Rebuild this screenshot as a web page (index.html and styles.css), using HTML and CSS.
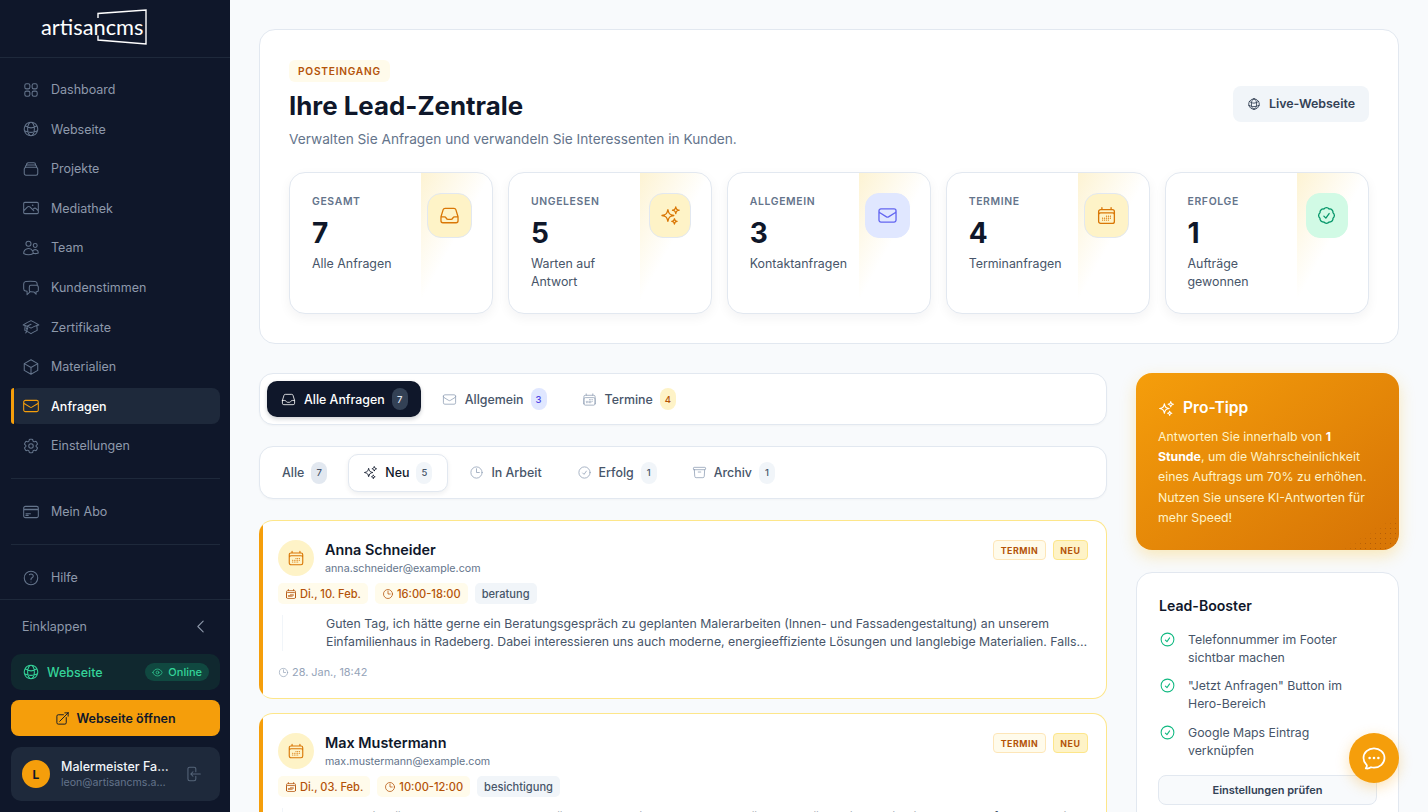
FILE: index.html
```html
<!DOCTYPE html>
<html lang="de">
<head>
<meta charset="utf-8">
<title>Anfragen</title>
<link rel="stylesheet" href="styles.css">
</head>
<body>
<svg class="defs" aria-hidden="true">
<symbol id="grid" viewBox="0 0 24 24"><path d="M3.75 6A2.25 2.25 0 0 1 6 3.75h2.25A2.25 2.25 0 0 1 10.5 6v2.25a2.25 2.25 0 0 1-2.25 2.25H6a2.25 2.25 0 0 1-2.25-2.25V6ZM3.75 15.75A2.25 2.25 0 0 1 6 13.5h2.25a2.25 2.25 0 0 1 2.25 2.25V18a2.25 2.25 0 0 1-2.25 2.25H6A2.25 2.25 0 0 1 3.75 18v-2.25ZM13.5 6a2.25 2.25 0 0 1 2.25-2.25H18A2.25 2.25 0 0 1 20.25 6v2.25A2.25 2.25 0 0 1 18 10.5h-2.25a2.25 2.25 0 0 1-2.25-2.25V6ZM13.5 15.75a2.25 2.25 0 0 1 2.25-2.25H18a2.25 2.25 0 0 1 2.25 2.25V18A2.25 2.25 0 0 1 18 20.25h-2.25A2.25 2.25 0 0 1 13.5 18v-2.25Z"/></symbol>
<symbol id="globe" viewBox="0 0 24 24"><path d="M12 21a9.004 9.004 0 0 0 8.716-6.747M12 21a9.004 9.004 0 0 1-8.716-6.747M12 21c2.485 0 4.5-4.03 4.5-9S14.485 3 12 3m0 18c-2.485 0-4.5-4.03-4.5-9S9.515 3 12 3m0 0a8.997 8.997 0 0 1 7.843 4.582M12 3a8.997 8.997 0 0 0-7.843 4.582m15.686 0A11.953 11.953 0 0 1 12 10.5c-2.998 0-5.74-1.1-7.843-2.918m15.686 0A8.959 8.959 0 0 1 21 12c0 .778-.099 1.533-.284 2.253m0 0A17.919 17.919 0 0 1 12 16.5c-3.162 0-6.133-.815-8.716-2.247m0 0A9.015 9.015 0 0 1 3 12c0-1.605.42-3.113 1.157-4.418"/></symbol>
<symbol id="stack" viewBox="0 0 24 24"><path d="M6 6.878V6a2.25 2.25 0 0 1 2.25-2.25h7.5A2.25 2.25 0 0 1 18 6v.878m-12 0c.235-.083.487-.128.75-.128h10.5c.263 0 .515.045.75.128m-12 0A2.25 2.25 0 0 0 4.5 9v.878m13.5-3A2.25 2.25 0 0 1 19.5 9v.878m0 0a2.246 2.246 0 0 0-.75-.128H5.25c-.263 0-.515.045-.75.128m15 0A2.25 2.25 0 0 1 21 12v6a2.25 2.25 0 0 1-2.25 2.25H5.25A2.25 2.25 0 0 1 3 18v-6c0-.98.626-1.813 1.5-2.122"/></symbol>
<symbol id="photo" viewBox="0 0 24 24"><path d="m2.25 15.75 5.159-5.159a2.25 2.25 0 0 1 3.182 0l5.159 5.159m-1.5-1.5 1.409-1.409a2.25 2.25 0 0 1 3.182 0l2.909 2.909m-18 3.75h16.5a1.5 1.5 0 0 0 1.5-1.5V6a1.5 1.5 0 0 0-1.5-1.5H3.75A1.5 1.5 0 0 0 2.25 6v12a1.5 1.5 0 0 0 1.5 1.5Zm10.5-11.25h.008v.008h-.008V8.25Zm.375 0a.375.375 0 1 1-.75 0 .375.375 0 0 1 .75 0Z"/></symbol>
<symbol id="users" viewBox="0 0 24 24"><path d="M15 19.128a9.38 9.38 0 0 0 2.625.372 9.337 9.337 0 0 0 4.121-.952 4.125 4.125 0 0 0-7.533-2.493M15 19.128v-.003c0-1.113-.285-2.16-.786-3.07M15 19.128v.106A12.318 12.318 0 0 1 8.624 21c-2.331 0-4.512-.645-6.374-1.766l-.001-.109a6.375 6.375 0 0 1 11.964-3.07M12 6.375a3.375 3.375 0 1 1-6.75 0 3.375 3.375 0 0 1 6.75 0Zm8.25 2.25a2.625 2.625 0 1 1-5.25 0 2.625 2.625 0 0 1 5.25 0Z"/></symbol>
<symbol id="chats" viewBox="0 0 24 24"><path d="M20.25 8.511c.884.284 1.5 1.128 1.5 2.097v4.286c0 1.136-.847 2.1-1.98 2.193-.34.027-.68.052-1.02.072v3.091l-3-3c-1.354 0-2.694-.055-4.02-.163a2.115 2.115 0 0 1-.825-.242m9.345-8.334a2.126 2.126 0 0 0-.476-.095 48.64 48.64 0 0 0-8.048 0c-1.131.094-1.976 1.057-1.976 2.192v4.286c0 .837.46 1.58 1.155 1.951m9.345-8.334V6.637c0-1.621-1.152-3.026-2.76-3.235A48.455 48.455 0 0 0 11.25 3c-2.115 0-4.198.137-6.24.402-1.608.209-2.76 1.614-2.76 3.235v6.226c0 1.621 1.152 3.026 2.76 3.235.577.075 1.157.14 1.74.194V21l4.155-4.155"/></symbol>
<symbol id="cap" viewBox="0 0 24 24"><path d="M4.26 10.147a60.438 60.438 0 0 0-.491 6.347A48.62 48.62 0 0 1 12 20.904a48.62 48.62 0 0 1 8.232-4.41 60.46 60.46 0 0 0-.491-6.347m-15.482 0a50.636 50.636 0 0 0-2.658-.813A59.906 59.906 0 0 1 12 3.493a59.903 59.903 0 0 1 10.399 5.84c-.896.248-1.783.52-2.658.814m-15.482 0A50.717 50.717 0 0 1 12 13.489a50.702 50.702 0 0 1 7.74-3.342M6.75 15a.75.75 0 1 0 0-1.5.75.75 0 0 0 0 1.5Zm0 0v-3.675A55.378 55.378 0 0 1 12 8.443m-7.007 11.55A5.981 5.981 0 0 0 6.75 15.75v-1.5"/></symbol>
<symbol id="cube" viewBox="0 0 24 24"><path d="m21 7.5-9-5.25L3 7.5m18 0-9 5.25m9-5.25v9l-9 5.25M3 7.5l9 5.25M3 7.5v9l9 5.25m0-9v9"/></symbol>
<symbol id="mail" viewBox="0 0 24 24"><path d="M21.75 6.75v10.5a2.25 2.25 0 0 1-2.25 2.25h-15a2.25 2.25 0 0 1-2.25-2.25V6.75m19.5 0A2.25 2.25 0 0 0 19.5 4.5h-15a2.25 2.25 0 0 0-2.25 2.25m19.5 0v.243a2.25 2.25 0 0 1-1.07 1.916l-7.5 4.615a2.25 2.25 0 0 1-2.36 0L3.32 8.91a2.25 2.25 0 0 1-1.07-1.916V6.75"/></symbol>
<symbol id="cog" viewBox="0 0 24 24"><path d="M9.594 3.94c.09-.542.56-.94 1.11-.94h2.593c.55 0 1.02.398 1.11.94l.213 1.281c.063.374.313.686.645.87.074.04.147.083.22.127.325.196.72.257 1.075.124l1.217-.456a1.125 1.125 0 0 1 1.37.49l1.296 2.247a1.125 1.125 0 0 1-.26 1.431l-1.003.827c-.293.241-.438.613-.43.992a7.723 7.723 0 0 1 0 .255c-.008.378.137.75.43.991l1.004.827c.424.35.534.955.26 1.43l-1.298 2.247a1.125 1.125 0 0 1-1.369.491l-1.217-.456c-.355-.133-.75-.072-1.076.124a6.47 6.47 0 0 1-.22.128c-.331.183-.581.495-.644.869l-.213 1.281c-.09.543-.56.94-1.11.94h-2.594c-.55 0-1.019-.398-1.11-.94l-.213-1.281c-.062-.374-.312-.686-.644-.87a6.52 6.52 0 0 1-.22-.127c-.325-.196-.72-.257-1.076-.124l-1.217.456a1.125 1.125 0 0 1-1.369-.49l-1.297-2.247a1.125 1.125 0 0 1 .26-1.431l1.004-.827c.292-.24.437-.613.43-.991a6.932 6.932 0 0 1 0-.255c.007-.38-.138-.751-.43-.992l-1.004-.827a1.125 1.125 0 0 1-.26-1.43l1.297-2.247a1.125 1.125 0 0 1 1.37-.491l1.216.456c.356.133.751.072 1.076-.124.072-.044.146-.086.22-.128.332-.183.582-.495.644-.869l.214-1.28Z"/><path d="M15 12a3 3 0 1 1-6 0 3 3 0 0 1 6 0Z"/></symbol>
<symbol id="card" viewBox="0 0 24 24"><path d="M2.25 8.25h19.5M2.25 9h19.5m-16.5 5.25h6m-6 2.25h3m-3.75 3h15a2.25 2.25 0 0 0 2.25-2.25V6.75A2.25 2.25 0 0 0 19.5 4.5h-15a2.25 2.25 0 0 0-2.25 2.25v10.5A2.25 2.25 0 0 0 4.5 19.5Z"/></symbol>
<symbol id="help" viewBox="0 0 24 24"><path d="M9.879 7.519c1.171-1.025 3.071-1.025 4.242 0 1.172 1.025 1.172 2.687 0 3.712-.203.179-.43.326-.67.442-.745.361-1.45.999-1.45 1.827v.75M21 12a9 9 0 1 1-18 0 9 9 0 0 1 18 0Zm-9 5.25h.008v.008H12v-.008Z"/></symbol>
<symbol id="chev" viewBox="0 0 24 24"><path d="M15.75 19.5 8.25 12l7.5-7.5"/></symbol>
<symbol id="eye" viewBox="0 0 24 24"><path d="M2.036 12.322a1.012 1.012 0 0 1 0-.639C3.423 7.51 7.36 4.5 12 4.5c4.638 0 8.573 3.007 9.963 7.178.07.207.07.431 0 .639C20.577 16.49 16.64 19.5 12 19.5c-4.638 0-8.573-3.007-9.963-7.178Z"/><path d="M15 12a3 3 0 1 1-6 0 3 3 0 0 1 6 0Z"/></symbol>
<symbol id="ext" viewBox="0 0 24 24"><path d="M13.5 6H5.25A2.25 2.25 0 0 0 3 8.25v10.5A2.25 2.25 0 0 0 5.25 21h10.5A2.25 2.25 0 0 0 18 18.75V10.5m-10.5 6L21 3m0 0h-5.25M21 3v5.25"/></symbol>
<symbol id="logout" viewBox="0 0 24 24"><path d="M15.75 9V5.25A2.25 2.25 0 0 0 13.5 3h-6a2.25 2.25 0 0 0-2.25 2.25v13.5A2.25 2.25 0 0 0 7.5 21h6a2.25 2.25 0 0 0 2.25-2.25V15M12 9l-3 3m0 0 3 3m-3-3h12.75"/></symbol>
<symbol id="inbox" viewBox="0 0 24 24"><path d="M2.25 13.5h3.86a2.25 2.25 0 0 1 2.012 1.244l.256.512a2.25 2.25 0 0 0 2.013 1.244h3.218a2.25 2.25 0 0 0 2.013-1.244l.256-.512a2.25 2.25 0 0 1 2.013-1.244h3.859m-19.5.338V18a2.25 2.25 0 0 0 2.25 2.25h15A2.25 2.25 0 0 0 21.75 18v-4.162c0-.224-.034-.447-.1-.661L19.24 5.338a2.25 2.25 0 0 0-2.15-1.588H6.911a2.25 2.25 0 0 0-2.15 1.588L2.35 13.177a2.25 2.25 0 0 0-.1.661Z"/></symbol>
<symbol id="spark" viewBox="0 0 24 24"><path d="M9.813 15.904 9 18.75l-.813-2.846a4.5 4.5 0 0 0-3.09-3.09L2.25 12l2.846-.813a4.5 4.5 0 0 0 3.09-3.09L9 5.25l.813 2.846a4.5 4.5 0 0 0 3.09 3.09L15.75 12l-2.846.813a4.5 4.5 0 0 0-3.09 3.09ZM18.259 8.715 18 9.75l-.259-1.035a3.375 3.375 0 0 0-2.455-2.456L14.25 6l1.036-.259a3.375 3.375 0 0 0 2.455-2.456L18 2.25l.259 1.035a3.375 3.375 0 0 0 2.456 2.456L21.75 6l-1.035.259a3.375 3.375 0 0 0-2.456 2.456ZM16.894 20.567 16.5 21.75l-.394-1.183a2.25 2.25 0 0 0-1.423-1.423L13.5 18.75l1.183-.394a2.25 2.25 0 0 0 1.423-1.423l.394-1.183.394 1.183a2.25 2.25 0 0 0 1.423 1.423l1.183.394-1.183.394a2.25 2.25 0 0 0-1.423 1.423Z"/></symbol>
<symbol id="cal" viewBox="0 0 24 24"><path d="M6.75 3v2.25M17.25 3v2.25M3 18.75V7.5a2.25 2.25 0 0 1 2.25-2.25h13.5A2.25 2.25 0 0 1 21 7.5v11.25m-18 0A2.25 2.25 0 0 0 5.25 21h13.5A2.25 2.25 0 0 0 21 18.75m-18 0v-7.5A2.25 2.25 0 0 1 5.25 9h13.5A2.25 2.25 0 0 1 21 11.25v7.5m-9-6h.008v.008H12v-.008ZM12 15h.008v.008H12V15Zm0 2.25h.008v.008H12v-.008ZM9.75 15h.008v.008H9.75V15Zm0 2.25h.008v.008H9.75v-.008ZM7.5 15h.008v.008H7.5V15Zm0 2.25h.008v.008H7.5v-.008Zm6.75-4.5h.008v.008h-.008v-.008Zm0 2.25h.008v.008h-.008V15Zm0 2.25h.008v.008h-.008v-.008Zm2.25-4.5h.008v.008H16.5v-.008Zm0 2.25h.008v.008H16.5V15Z"/></symbol>
<symbol id="badge" viewBox="0 0 24 24"><path d="M9 12.75 11.25 15 15 9.75M21 12c0 1.268-.63 2.39-1.593 3.068a3.745 3.745 0 0 1-1.043 3.296 3.745 3.745 0 0 1-3.296 1.043A3.745 3.745 0 0 1 12 21c-1.268 0-2.39-.63-3.068-1.593a3.746 3.746 0 0 1-3.296-1.043 3.745 3.745 0 0 1-1.043-3.296A3.745 3.745 0 0 1 3 12c0-1.268.63-2.39 1.593-3.068a3.745 3.745 0 0 1 1.043-3.296 3.746 3.746 0 0 1 3.296-1.043A3.746 3.746 0 0 1 12 3c1.268 0 2.39.63 3.068 1.593a3.746 3.746 0 0 1 3.296 1.043 3.746 3.746 0 0 1 1.043 3.296A3.745 3.745 0 0 1 21 12Z"/></symbol>
<symbol id="check" viewBox="0 0 24 24"><path d="M9 12.75 11.25 15 15 9.75M21 12a9 9 0 1 1-18 0 9 9 0 0 1 18 0Z"/></symbol>
<symbol id="clock" viewBox="0 0 24 24"><path d="M12 6v6h4.5m4.5 0a9 9 0 1 1-18 0 9 9 0 0 1 18 0Z"/></symbol>
<symbol id="archive" viewBox="0 0 24 24"><path d="m20.25 7.5-.625 10.632a2.25 2.25 0 0 1-2.247 2.118H6.622a2.25 2.25 0 0 1-2.247-2.118L3.75 7.5M10 11.25h4M3.375 7.5h17.25c.621 0 1.125-.504 1.125-1.125v-1.5c0-.621-.504-1.125-1.125-1.125H3.375c-.621 0-1.125.504-1.125 1.125v1.5c0 .621.504 1.125 1.125 1.125Z"/></symbol>
<symbol id="bubble" viewBox="0 0 24 24"><path d="M8.625 12a.375.375 0 1 1-.75 0 .375.375 0 0 1 .75 0Zm0 0H8.25m4.125 0a.375.375 0 1 1-.75 0 .375.375 0 0 1 .75 0Zm0 0H12m4.125 0a.375.375 0 1 1-.75 0 .375.375 0 0 1 .75 0Zm0 0h-.375M21 12c0 4.556-4.03 8.25-9 8.25a9.764 9.764 0 0 1-2.555-.337A5.972 5.972 0 0 1 5.41 20.97a5.969 5.969 0 0 1-.474-.065 4.48 4.48 0 0 0 .978-2.025c.09-.457-.133-.901-.467-1.226C3.93 16.178 3 14.189 3 12c0-4.556 4.03-8.25 9-8.25s9 3.694 9 8.25Z"/></symbol>
</svg>

<div class="app">
  <aside class="sidebar">
    <div class="logo">
      <div class="logo-mark">
        <span class="logo-text">artisancms</span>
        <svg class="logo-frame" viewBox="0 0 50 36"><path d="M1 9V4.500L49 1V35L1 31V26.500"/></svg>
      </div>
    </div>
    <nav class="nav">
      <a class="nav-item"><svg class="ic"><use href="#grid"/></svg>Dashboard</a>
      <a class="nav-item"><svg class="ic"><use href="#globe"/></svg>Webseite</a>
      <a class="nav-item"><svg class="ic"><use href="#stack"/></svg>Projekte</a>
      <a class="nav-item"><svg class="ic"><use href="#photo"/></svg>Mediathek</a>
      <a class="nav-item"><svg class="ic"><use href="#users"/></svg>Team</a>
      <a class="nav-item"><svg class="ic"><use href="#chats"/></svg>Kundenstimmen</a>
      <a class="nav-item"><svg class="ic"><use href="#cap"/></svg>Zertifikate</a>
      <a class="nav-item"><svg class="ic"><use href="#cube"/></svg>Materialien</a>
      <a class="nav-item active"><svg class="ic"><use href="#mail"/></svg>Anfragen</a>
      <a class="nav-item"><svg class="ic"><use href="#cog"/></svg>Einstellungen</a>
      <div class="nav-sep"></div>
      <a class="nav-item"><svg class="ic"><use href="#card"/></svg>Mein Abo</a>
      <div class="nav-sep"></div>
      <a class="nav-item"><svg class="ic"><use href="#help"/></svg>Hilfe</a>
    </nav>
    <div class="side-foot">
      <div class="collapse"><span>Einklappen</span><svg class="ic"><use href="#chev"/></svg></div>
      <div class="site-status">
        <svg class="ic"><use href="#globe"/></svg><span class="site-name">Webseite</span>
        <span class="online"><svg class="ic"><use href="#eye"/></svg>Online</span>
      </div>
      <button class="open-btn"><svg class="ic"><use href="#ext"/></svg>Webseite öffnen</button>
      <div class="user">
        <span class="avatar">L</span>
        <div class="user-text">
          <div class="user-name">Malermeister Fabian Hoffmann</div>
          <div class="user-mail">leon@artisancms.app</div>
        </div>
        <svg class="ic user-out"><use href="#logout"/></svg>
      </div>
    </div>
  </aside>

  <main class="main">
    <section class="hero">
      <div class="hero-top">
        <div>
          <span class="eyebrow">POSTEINGANG</span>
          <h1 class="title">Ihre Lead-Zentrale</h1>
          <p class="sub">Verwalten Sie Anfragen und verwandeln Sie Interessenten in Kunden.</p>
        </div>
        <button class="live-btn"><svg class="ic"><use href="#globe"/></svg>Live-Webseite</button>
      </div>
      <div class="stats">
        <div class="stat">
          <div class="stat-body"><div class="stat-label">GESAMT</div><div class="stat-num">7</div><div class="stat-desc">Alle Anfragen</div></div>
          <div class="stat-icon amber"><svg class="ic"><use href="#inbox"/></svg></div>
        </div>
        <div class="stat">
          <div class="stat-body"><div class="stat-label">UNGELESEN</div><div class="stat-num">5</div><div class="stat-desc">Warten auf Antwort</div></div>
          <div class="stat-icon amber narrow"><svg class="ic"><use href="#spark"/></svg></div>
        </div>
        <div class="stat">
          <div class="stat-body"><div class="stat-label">ALLGEMEIN</div><div class="stat-num">3</div><div class="stat-desc">Kontaktanfragen</div></div>
          <div class="stat-icon indigo"><svg class="ic"><use href="#mail"/></svg></div>
        </div>
        <div class="stat">
          <div class="stat-body"><div class="stat-label">TERMINE</div><div class="stat-num">4</div><div class="stat-desc">Terminanfragen</div></div>
          <div class="stat-icon amber"><svg class="ic"><use href="#cal"/></svg></div>
        </div>
        <div class="stat">
          <div class="stat-body"><div class="stat-label">ERFOLGE</div><div class="stat-num">1</div><div class="stat-desc">Aufträge gewonnen</div></div>
          <div class="stat-icon green narrow"><svg class="ic"><use href="#badge"/></svg></div>
        </div>
      </div>
    </section>

    <div class="columns">
      <div class="left">
        <div class="tabbar">
          <button class="tab dark"><svg class="ic"><use href="#inbox"/></svg>Alle Anfragen<span class="count c-dark">7</span></button>
          <button class="tab"><svg class="ic"><use href="#mail"/></svg>Allgemein<span class="count c-indigo">3</span></button>
          <button class="tab"><svg class="ic"><use href="#cal"/></svg>Termine<span class="count c-amber">4</span></button>
        </div>
        <div class="tabbar second">
          <button class="tab plain">Alle<span class="count c-slate">7</span></button>
          <button class="tab raised"><svg class="ic"><use href="#spark"/></svg>Neu<span class="count c-light">5</span></button>
          <button class="tab"><svg class="ic"><use href="#clock"/></svg>In Arbeit</button>
          <button class="tab"><svg class="ic"><use href="#check"/></svg>Erfolg<span class="count c-light">1</span></button>
          <button class="tab"><svg class="ic"><use href="#archive"/></svg>Archiv<span class="count c-light">1</span></button>
        </div>

        <article class="lead">
          <div class="lead-head">
            <span class="lead-avatar"><svg class="ic"><use href="#cal"/></svg></span>
            <div class="lead-who"><div class="lead-name">Anna Schneider</div><div class="lead-mail">anna.schneider@example.com</div></div>
            <div class="lead-tags"><span class="tag tag-light">TERMIN</span><span class="tag tag-amber">NEU</span></div>
          </div>
          <div class="chips">
            <span class="chip chip-date"><svg class="ic"><use href="#cal"/></svg>Di., 10. Feb.</span>
            <span class="chip chip-time"><svg class="ic"><use href="#clock"/></svg>16:00-18:00</span>
            <span class="chip chip-type">beratung</span>
          </div>
          <p class="msg">Guten Tag, ich hätte gerne ein Beratungsgespräch zu geplanten Malerarbeiten (Innen- und Fassadengestaltung) an unserem Einfamilienhaus in Radeberg. Dabei interessieren uns auch moderne, energieeffiziente Lösungen und langlebige Materialien. Falls möglich, würden wir gerne verschiedene Varianten und Farbkonzepte vor Ort besprechen.</p>
          <div class="lead-time"><svg class="ic"><use href="#clock"/></svg>28. Jan., 18:42</div>
        </article>

        <article class="lead">
          <div class="lead-head">
            <span class="lead-avatar"><svg class="ic"><use href="#cal"/></svg></span>
            <div class="lead-who"><div class="lead-name">Max Mustermann</div><div class="lead-mail">max.mustermann@example.com</div></div>
            <div class="lead-tags"><span class="tag tag-light">TERMIN</span><span class="tag tag-amber">NEU</span></div>
          </div>
          <div class="chips">
            <span class="chip chip-date"><svg class="ic"><use href="#cal"/></svg>Di., 03. Feb.</span>
            <span class="chip chip-time"><svg class="ic"><use href="#clock"/></svg>10:00-12:00</span>
            <span class="chip chip-type">besichtigung</span>
          </div>
          <p class="msg">Hallo, wir möchten gerne unsere Wohnräume neu streichen lassen und würden uns über eine Besichtigung vor Ort freuen, damit Sie uns ein passendes Angebot erstellen können.</p>
          <div class="lead-time"><svg class="ic"><use href="#clock"/></svg>26. Jan., 09:15</div>
        </article>
      </div>

      <aside class="right">
        <div class="tip">
          <h3 class="tip-title"><svg class="ic"><use href="#spark"/></svg>Pro-Tipp</h3>
          <p class="tip-text">Antworten Sie innerhalb von <b>1 Stunde</b>, um die Wahrscheinlichkeit eines Auftrags um 70% zu erhöhen. Nutzen Sie unsere KI-Antworten für mehr Speed!</p>
        </div>
        <div class="booster">
          <h3 class="booster-title">Lead-Booster</h3>
          <ul class="checks">
            <li><svg class="ic"><use href="#check"/></svg><span>Telefonnummer im Footer sichtbar machen</span></li>
            <li><svg class="ic"><use href="#check"/></svg><span>"Jetzt Anfragen" Button im Hero-Bereich</span></li>
            <li><svg class="ic"><use href="#check"/></svg><span>Google Maps Eintrag verknüpfen</span></li>
          </ul>
          <button class="check-btn">Einstellungen prüfen</button>
        </div>
      </aside>
    </div>
  </main>
</div>
<button class="fab" aria-label="Chat"><svg class="ic"><use href="#bubble"/></svg></button>
</body>
</html>
```
FILE: styles.css
```css
* { box-sizing: border-box; }
html, body { margin: 0; height: 100%; overflow: hidden; }
body { font-family: Inter, "Liberation Sans", sans-serif; color: #0f172a; background: #f8fafc; -webkit-font-smoothing: antialiased; }
button { font-family: inherit; border: 0; background: none; cursor: pointer; padding: 0; }
h1, h3, p, ul { margin: 0; padding: 0; }
.defs { display: none; }
.ic { fill: none; stroke: currentColor; stroke-width: 1.5; stroke-linecap: round; stroke-linejoin: round; flex: none; width: 16px; height: 16px; }

.app { display: flex; height: 812px; }

/* sidebar */
.sidebar { width: 230px; flex: none; background: #0f172a; display: flex; flex-direction: column; height: 812px; }
.logo { height: 58px; flex: none; border-bottom: 1px solid #1e293b; padding: 9px 0 0 41px; }
.logo-mark { position: relative; width: 106px; height: 36px; display: flex; align-items: center; }
.logo-text { font-family: Lato, sans-serif; font-weight: 400; font-size: 21.8px; color: #fff; line-height: 1; }
.logo-frame { position: absolute; left: 56px; top: 0; width: 50px; height: 36px; fill: none; stroke: #fff; stroke-width: 1.4; }
.nav { padding: 14px 10px 0 11px; display: flex; flex-direction: column; gap: 4px; flex: 1; min-height: 0; }
.nav-item { position: relative; height: 35.55px; flex: none; display: flex; align-items: center; gap: 11px; padding-left: 11px; border-radius: 8px; font-size: 12.5px; font-weight: 400; color: #8e99ab; white-space: nowrap; }
.nav-item .ic { width: 18px; height: 18px; color: #64748b; stroke-width: 1.4; }
.nav-item.active { background: #1e293b; color: #fff; font-weight: 500; }
.nav-item.active .ic { color: #f59e0b; }
.nav-item.active::before { content: ""; position: absolute; left: 0; top: 0; bottom: 0; width: 3px; background: #f59e0b; border-radius: 8px 0 0 8px; }
.nav-sep { height: 1px; flex: none; background: #1e293b; margin: 10.7px 0; }
.side-foot { flex: none; border-top: 1px solid #1e293b; padding: 0 10px 11px 11px; }
.collapse { display: flex; align-items: center; justify-content: space-between; height: 54px; padding: 0 11px 2px; font-size: 12.5px; color: #8e99ab; }
.collapse .ic { width: 17px; height: 17px; color: #8e99ab; }
.site-status { height: 36px; border-radius: 10px; background: #10282f; display: flex; align-items: center; padding: 0 11px; color: #34d399; font-size: 12.5px; font-weight: 500; gap: 7px; }
.site-status > .ic { width: 18px; height: 18px; stroke-width: 1.4; }
.site-name { flex: 1; }
.online { display: flex; align-items: center; gap: 5px; height: 18px; padding: 0 7px; border-radius: 9px; background: rgba(16,185,129,.22); font-size: 11px; font-weight: 500; }
.online .ic { width: 11px; height: 11px; }
.open-btn { margin-top: 10px; width: 100%; height: 36px; border-radius: 8px; background: #f59e0b; color: #0f172a; font-size: 12.5px; font-weight: 600; display: flex; align-items: center; justify-content: center; gap: 6px; }
.open-btn .ic { width: 15px; height: 15px; }
.user { margin-top: 11px; height: 54px; border-radius: 10px; background: #1e293b; display: flex; align-items: center; padding: 0 18px 0 11px; }
.avatar { width: 28px; height: 28px; border-radius: 50%; background: #f59e0b; color: #0f172a; font-size: 12px; font-weight: 700; display: flex; align-items: center; justify-content: center; flex: none; }
.user-text { width: 108px; margin-left: 11px; min-width: 0; }
.user-name { font-size: 12.5px; font-weight: 500; color: #f1f5f9; white-space: nowrap; overflow: hidden; text-overflow: ellipsis; line-height: 17px; }
.user-mail { font-size: 10.6px; color: #64748b; white-space: nowrap; overflow: hidden; text-overflow: ellipsis; line-height: 16px; }
.user-out { width: 18px; height: 18px; margin-left: auto; color: #56657a; stroke-width: 1.4; }

/* main */
.main { flex: 1; min-width: 0; padding: 29px 29px 0; overflow: hidden; }
.hero { height: 315px; background: #fff; border: 1px solid #e2e8f0; border-radius: 16px; padding: 30px 29px; }
.hero-top { display: flex; justify-content: space-between; align-items: center; }
.eyebrow { display: inline-block; height: 22px; line-height: 22px; padding: 0 9px; border-radius: 6px; background: #fffbeb; color: #b45309; font-size: 10.2px; font-weight: 600; letter-spacing: .75px; vertical-align: top; }
.title { font-size: 25.85px; font-weight: 700; line-height: 32px; margin-top: 8px; }
.sub { font-size: 13.68px; color: #64748b; line-height: 20px; margin-top: 7px; }
.live-btn { height: 36px; padding: 0 14px 1px; border-radius: 8px; background: #f1f5f9; color: #334155; font-size: 12.4px; font-weight: 600; display: flex; align-items: center; gap: 8px; margin-top: -1px; }
.live-btn .ic { width: 14px; height: 14px; }
.stats { display: flex; gap: 14.4px; margin-top: 23px; }
.stat { position: relative; flex: 1 1 0; height: 142px; background: #fff; border: 1px solid #e2e8f0; border-radius: 16px; box-shadow: 0 4px 12px rgba(15,23,42,.05); padding: 21px 20px 20px 22px; display: flex; justify-content: space-between; overflow: hidden; }
.stat::before { content: ""; position: absolute; top: 0; right: 0; width: 71px; height: 128px; background: linear-gradient(to bottom right, #fdf3d3 0%, rgba(254,243,199,0) 50%); }
.stat-body { position: relative; width: 105px; flex: none; }
.stat-label { font-size: 10.4px; font-weight: 600; letter-spacing: .65px; color: #64748b; line-height: 16px; }
.stat-num { font-size: 28px; font-weight: 700; line-height: 34px; margin-top: 6px; }
.stat-desc { font-size: 12.4px; color: #475569; line-height: 18px; margin-top: 5px; }
.stat-icon { position: relative; width: 45px; height: 45px; margin-top: -1px; border-radius: 14px; border: 1px solid #e2e8f0; display: flex; align-items: center; justify-content: center; flex: none; }
.stat-icon .ic { width: 21px; height: 21px; }
.narrow { width: 42px; }
.amber { background: #fef3c7; color: #d97706; }
.indigo { background: #e0e7ff; color: #6366f1; border-color: #e0e7ff; }
.green { background: #d1fae5; color: #059669; border-color: #d1fae5; }

.columns { display: flex; gap: 29px; margin-top: 29px; align-items: flex-start; }
.left { width: 848px; flex: none; }
.right { flex: 1; min-width: 0; }

.tabbar { height: 52px; background: #fff; border: 1px solid #e2e8f0; border-radius: 14px; box-shadow: 0 1px 2px rgba(15,23,42,.03); padding: 0 7px; display: flex; align-items: center; gap: 7px; }
.tabbar.second { height: 53px; margin-top: 21px; }
.tab { height: 36px; padding: 0 14px; display: flex; align-items: center; gap: 7px; border-radius: 10px; font-size: 12.4px; font-weight: 500; color: #475569; white-space: nowrap; }
.tab .ic { width: 15px; height: 15px; color: #94a3b8; stroke-width: 1.3; }
.tabbar:not(.second) .tab .ic { margin-right: 1px; }
.tab.dark { background: #0f172a; color: #fff; padding-right: 13px; box-shadow: 0 2px 4px rgba(15,23,42,.2); }
.tab.dark .ic { color: #fff; }
.tab.plain { padding-left: 15px; }
.tab.raised { height: 38px; background: #fff; color: #0f172a; border: 1px solid #e2e8f0; gap: 7px; padding-right: 15px; box-shadow: 0 2px 5px rgba(15,23,42,.07); }
.tab.raised .ic { color: #0f172a; }
.count { min-width: 16px; height: 22px; padding: 0 5px; border-radius: 8px; font-size: 9.5px; font-weight: 500; display: inline-flex; align-items: center; justify-content: center; }
.c-dark { background: #334155; color: #e2e8f0; }
.c-indigo { background: #e0e7ff; color: #4f46e5; }
.c-amber { background: #fef3c7; color: #b45309; }
.c-slate { background: #e2e8f0; color: #475569; }
.c-light { background: #f1f5f9; color: #475569; }

.lead { margin-top: 21px; height: 179px; background: #fff; border: 1px solid #fde68a; border-left: 0; border-radius: 14px; position: relative; padding: 20px 18px 0 19px; overflow: hidden; }
.lead + .lead { margin-top: 14px; }
.lead::before { content: ""; position: absolute; left: 0; top: 0; bottom: 0; width: 4px; background: #f59e0b; }
.lead-head { display: flex; align-items: flex-start; }
.lead-avatar { width: 36px; height: 36px; border-radius: 50%; background: #fef3c7; color: #d97706; display: flex; align-items: center; justify-content: center; flex: none; margin-top: -1px; }
.lead-avatar .ic { width: 18px; height: 18px; }
.lead-who { margin-left: 11px; flex: 1; }
.lead-name { font-size: 14.4px; font-weight: 600; line-height: 18px; }
.lead-mail { font-size: 10.7px; color: #64748b; line-height: 20px; }
.lead-tags { display: flex; gap: 7px; margin-top: -1px; }
.tag { height: 20px; padding: 0 6.5px; border-radius: 4px; font-size: 8.8px; font-weight: 700; letter-spacing: .55px; color: #b45309; display: flex; align-items: center; }
.tag-light { background: #fffbeb; border: 1px solid #fde6b8; }
.tag-amber { background: #fef3c7; border: 1px solid #fde68a; }
.chips { display: flex; gap: 7px; margin-top: 4px; }
.chip { height: 21px; padding: 0 7px; border-radius: 5px; display: flex; align-items: center; gap: 3px; font-size: 11.1px; font-weight: 500; }
.chip .ic { width: 12px; height: 12px; }
.chip-date, .chip-time { background: #fffbeb; color: #b45309; }
.chip-type { background: #f1f5f9; color: #475569; }
.msg { margin-top: 11px; margin-left: 4px; padding-left: 43px; border-left: 1px solid #f1f5f9; font-size: 12.3px; line-height: 18px; color: #475569; display: -webkit-box; -webkit-box-orient: vertical; -webkit-line-clamp: 2; overflow: hidden; }
.lead-time { margin-top: 14px; display: flex; align-items: center; gap: 3px; font-size: 10.9px; color: #94a3b8; line-height: 14px; }
.lead-time .ic { width: 11px; height: 11px; }

.tip { height: 177px; border-radius: 16px; background: linear-gradient(145deg, #f59e0b, #d97706 90%); box-shadow: 0 6px 16px rgba(251,191,36,.3); padding: 25px 22px; color: #fff; position: relative; overflow: hidden; }
.tip::after { content: ""; position: absolute; right: 0; bottom: 0; width: 56px; height: 34px; background: radial-gradient(circle, rgba(120,53,15,.38) .7px, transparent 1px) 0 0 / 5px 5px; -webkit-mask-image: linear-gradient(to bottom right, transparent 45%, #000 60%); mask-image: linear-gradient(to bottom right, transparent 45%, #000 60%); }
.tip-title { display: flex; align-items: center; gap: 8px; font-size: 15.6px; font-weight: 600; line-height: 20px; }
.tip-title .ic { width: 17px; height: 17px; }
.tip-text { font-size: 12.3px; line-height: 20.2px; margin-top: 9px; color: #fef3c7; }
.tip-text b { font-weight: 700; color: #fff; }
.booster { margin-top: 22px; height: 300px; background: #fff; border: 1px solid #e2e8f0; border-radius: 16px; padding: 23px 21px 23px 22px; }
.booster-title { font-size: 14.1px; font-weight: 600; line-height: 20px; }
.checks { list-style: none; margin-top: 15px; }
.checks li { display: flex; gap: 12px; font-size: 12.3px; line-height: 18px; color: #475569; margin-bottom: 10.4px; }
.checks .ic { width: 17px; height: 17px; color: #10b981; }
.check-btn { display: block; width: 219px; height: 30px; margin: 15px 0 0 -1px; background: #f8fafc; border: 1px solid #e2e8f0; border-radius: 8px; font-size: 11px; font-weight: 600; color: #334155; }

.fab { position: fixed; right: 29px; bottom: 29px; width: 50px; height: 50px; border-radius: 50%; background: #f59e0b; color: #fff; display: flex; align-items: center; justify-content: center; box-shadow: 0 4px 14px rgba(245,158,11,.3); }
.fab .ic { width: 28px; height: 28px; }
```
